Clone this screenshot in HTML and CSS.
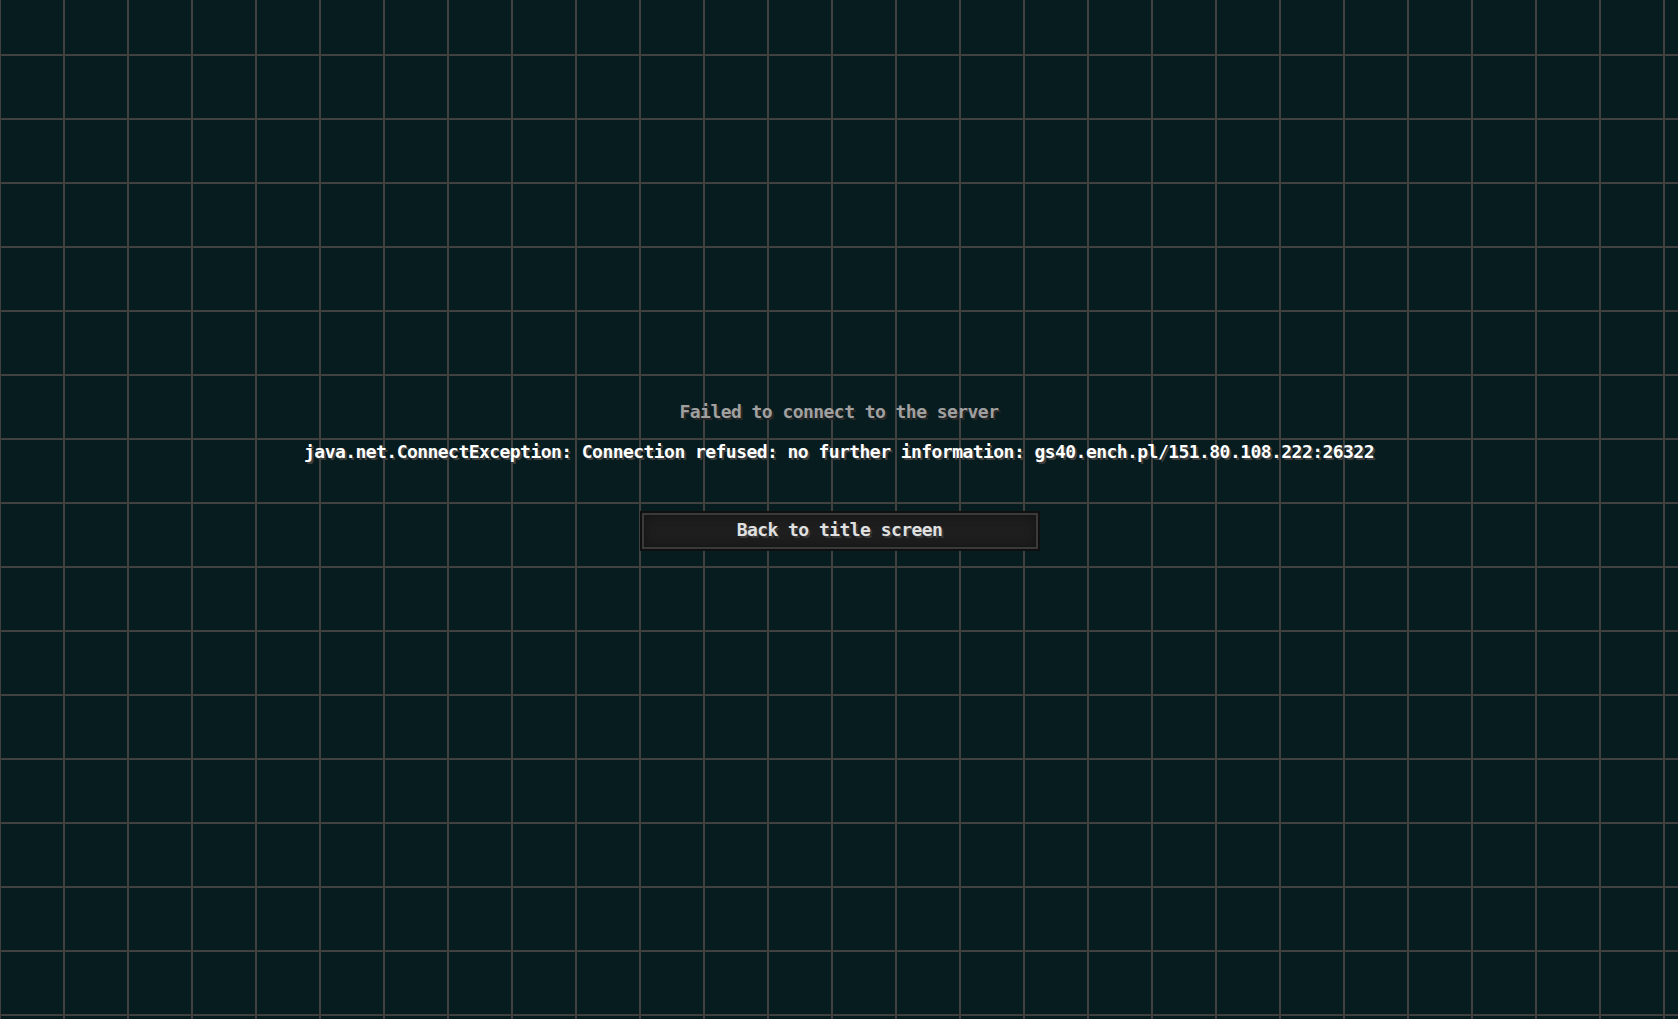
FILE: index.html
```html
<!DOCTYPE html>
<html lang="en">
<head>
    <meta charset="UTF-8">
    <title>Disconnected</title>
    <link rel="stylesheet" href="styles.css">
</head>
<body>
    <div class="screen">
        <p class="title">Failed to connect to the server</p>
        <p class="reason">java.net.ConnectException: Connection refused: no further information: gs40.ench.pl/151.80.108.222:26322</p>
        <button class="mc-button">Back to title screen</button>
    </div>
</body>
</html>
```

FILE: styles.css
```css
html, body {
    margin: 0;
    padding: 0;
    height: 100%;
    overflow: hidden;
}

body {
    font-family: 'DejaVu Sans Mono', 'Liberation Mono', monospace;
    font-size: 18px;
    font-weight: bold;
    letter-spacing: -0.55px;
    background-color: #061c1e;
    background-image:
        linear-gradient(to right, #404040 0 2px, transparent 2px),
        linear-gradient(to bottom, #404040 0 2px, transparent 2px);
    background-size: 64px 64px, 64px 64px;
    background-position: -1px 0, 0 54px;
}

.screen {
    display: flex;
    flex-direction: column;
    align-items: center;
    padding-top: 402px;
}

.screen p {
    margin: 0;
    line-height: 20px;
    white-space: nowrap;
}

.title {
    color: #a0a0a0;
    text-shadow: 2px 2px 0 #282828;
}

.reason {
    margin-top: 20px !important;
    color: #fff;
    text-shadow: 2px 2px 0 #3f3f3f;
}

.mc-button {
    box-sizing: border-box;
    width: 400px;
    height: 40px;
    margin-top: 49px;
    margin-left: 1px;
    padding: 0 0 3px;
    font: inherit;
    letter-spacing: inherit;
    color: #e0e0e0;
    text-shadow: 2px 2px 0 #383838;
    background: #1e1e1e;
    border: 2px solid #101010;
    box-shadow: inset 0 0 0 2px #3a3a3a, inset 0 0 8px 4px #161616;
    cursor: pointer;
}
```
